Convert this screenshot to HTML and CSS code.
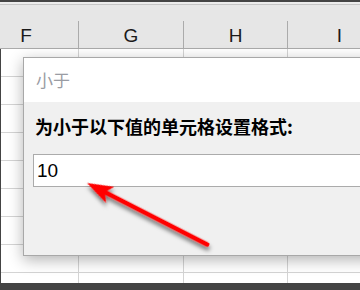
FILE: index.html
```html
<!DOCTYPE html>
<html lang="zh-CN">
<head>
    <meta charset="UTF-8">
    <title>小于</title>
    <link rel="stylesheet" href="styles.css">
</head>
<body>
    <div class="window">
        <div class="top-bar"></div>
        <div class="top-strip"></div>

        <!-- column letters -->
        <div class="col-header">
            <div class="col-name">F</div>
            <div class="col-name">G</div>
            <div class="col-name">H</div>
            <div class="col-name">I</div>
        </div>

        <!-- empty cells -->
        <div class="sheet">
            <div class="cells">
                <div></div><div></div><div></div><div></div>
                <div></div><div></div><div></div><div></div>
                <div></div><div></div><div></div><div></div>
                <div></div><div></div><div></div><div></div>
                <div></div><div></div><div></div><div></div>
                <div></div><div></div><div></div><div></div>
                <div></div><div></div><div></div><div></div>
                <div></div><div></div><div></div><div></div>
                <div></div><div></div><div></div><div></div>
            </div>
        </div>

        <div class="status-bar"></div>

        <!-- conditional format dialog -->
        <div class="dialog">
            <div class="dialog-title">小于</div>
            <div class="dialog-body">
                <div class="dialog-label">为小于以下值的单元格设置格式:</div>
                <div class="value-box">10</div>
            </div>
        </div>

        <!-- red pointer arrow -->
        <svg class="pointer" width="360" height="290" viewBox="0 0 360 290">
            <defs>
                <filter id="arrow-shadow" x="-20%" y="-20%" width="140%" height="160%">
                    <feDropShadow dx="2" dy="3" stdDeviation="2" flood-color="#000" flood-opacity="0.55"/>
                </filter>
            </defs>
            <g filter="url(#arrow-shadow)" transform="translate(87 183) rotate(27.1)">
                <line x1="18" y1="0" x2="135" y2="0" stroke="#ff0000" stroke-width="4.5" stroke-linecap="round"/>
                <polygon points="0,0 26,-9 20,0 26,9" fill="#ff0000"/>
            </g>
        </svg>
    </div>
</body>
</html>
```

FILE: styles.css
```css
* {
    margin: 0;
    padding: 0;
    box-sizing: border-box;
}

body {
    width: 360px;
    height: 290px;
    overflow: hidden;
    background: #ffffff;
    font-family: "Liberation Sans", Arial, sans-serif;
}

.window {
    position: relative;
    width: 360px;
    height: 290px;
    overflow: hidden;
    display: flex;
    flex-direction: column;
}

.top-bar {
    height: 2px;
    background: #444444;
}

.top-strip {
    height: 2px;
    background: #ececec;
}

.col-header {
    display: grid;
    grid-template-columns: 105px 105px 104px 104px;
    margin-left: -26px;
    height: 45px;
    background: #e6e6e6;
    border-top: 1px solid #c6c6c6;
    border-bottom: 1px solid #ababab;
}

.col-name {
    align-self: end;
    height: 27px;
    padding-top: 3px;
    line-height: 24px;
    font-size: 19px;
    color: #1a1a1a;
    text-align: center;
    border-right: 1px solid #ababab;
}

.sheet {
    height: 234px;
    overflow: hidden;
    border-left: 1px solid #444444;
}

.cells {
    display: grid;
    grid-template-columns: 105px 105px 104px 104px;
    grid-auto-rows: 28px;
    margin-left: -27px;
}

.cells div {
    border-right: 1px solid #d4d4d4;
    border-bottom: 1px solid #d4d4d4;
}

.status-bar {
    flex: 1;
    background: #444444;
}

.dialog {
    position: absolute;
    left: 23px;
    top: 57px;
    width: 360px;
    height: 199px;
    display: flex;
    flex-direction: column;
    border: 1px solid #a8a8a8;
    background: #f0f0f0;
    box-shadow: 0 4px 14px rgba(0, 0, 0, 0.3);
    font-family: "Noto Sans CJK SC", "Liberation Sans", sans-serif;
}

.dialog-title {
    height: 44px;
    padding: 13px 0 0 12px;
    line-height: 17px;
    font-size: 17px;
    color: #9a9ca3;
    background: #ffffff;
}

.dialog-body {
    flex: 1;
    padding: 15px 0 0 9px;
}

.dialog-label {
    padding-left: 2px;
    line-height: 18px;
    font-size: 18px;
    font-weight: bold;
    color: #000000;
}

.value-box {
    margin-top: 19px;
    height: 33px;
    padding-left: 3px;
    line-height: 31px;
    font-family: "Liberation Sans", Arial, sans-serif;
    font-size: 19px;
    color: #000000;
    background: #ffffff;
    border: 1px solid #ababab;
    border-right: none;
}

.pointer {
    position: absolute;
    left: 0;
    top: 0;
}
```
